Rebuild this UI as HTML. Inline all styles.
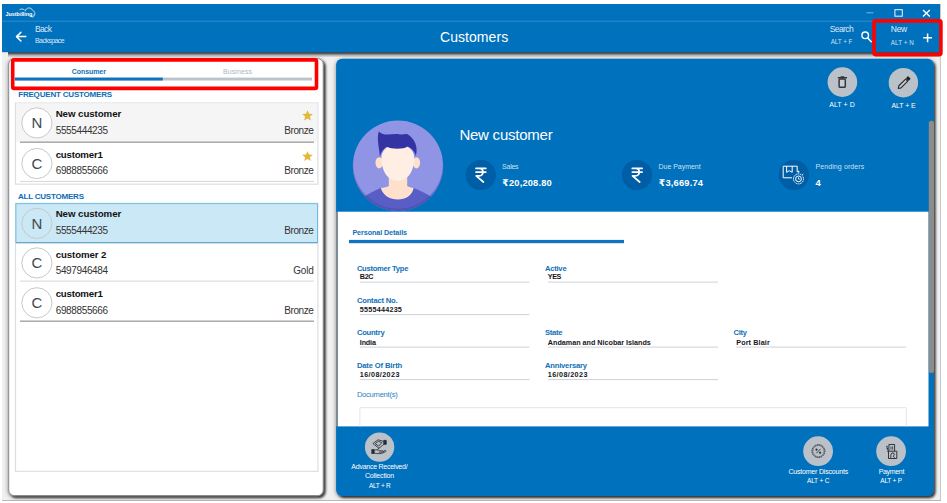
<!DOCTYPE html>
<html lang="en">
<head>
<meta charset="utf-8">
<title>Customers</title>
<style>
*{box-sizing:border-box;margin:0;padding:0}
html,body{width:947px;height:503px;overflow:hidden;background:#fff}
body{font-family:"Liberation Sans","DejaVu Sans",sans-serif;position:relative;color:#000}
svg#g{position:absolute;left:0;top:0}
.t{position:absolute;white-space:nowrap;line-height:1}
</style>
</head>
<body>
<svg id="g" width="947" height="503" viewBox="0 0 947 503">
  <defs>
    <linearGradient id="hs" x1="0" y1="0" x2="0" y2="1">
      <stop offset="0" stop-color="#383c40"/><stop offset=".3" stop-color="#5c6064"/><stop offset=".62" stop-color="#b6b6b6"/><stop offset="1" stop-color="#eeeeee"/>
    </linearGradient>
    <filter id="ps" x="-5%" y="-5%" width="110%" height="110%">
      <feGaussianBlur in="SourceAlpha" stdDeviation=".9" result="b1"/>
      <feOffset in="b1" dx="1.700" dy="1.700" result="o1"/>
      <feComponentTransfer in="o1" result="s1"><feFuncA type="linear" slope=".7"/></feComponentTransfer>
      <feGaussianBlur in="SourceAlpha" stdDeviation="1.900" result="b2"/>
      <feOffset in="b2" dx=".4" dy="1.300" result="o2"/>
      <feComponentTransfer in="o2" result="s2"><feFuncA type="linear" slope=".46"/></feComponentTransfer>
      <feMerge><feMergeNode in="s2"/><feMergeNode in="s1"/><feMergeNode in="SourceGraphic"/></feMerge>
    </filter>
    <clipPath id="avc"><circle cx="398" cy="165.700" r="45.200"/></clipPath>
    <path id="star" d="M0 -5.4L1.5 -1.8L5.4 -1.5L2.4 1L3.3 4.8L0 2.8L-3.3 4.800L-2.400 1L-5.400 -1.500L-1.500 -1.800Z" fill="#e3b93c"/>
    <g id="rupee" fill="none" stroke="#fff" stroke-width="1.7" stroke-linecap="round" stroke-linejoin="round">
      <path d="M-4.8 -6.6H5M-4.8 -2.9H5M-4.400 -6.600H-1.600C3.400 -6.600 3.400 .900 -1.600 .900H-4.600L2.600 7"/>
    </g>
  </defs>

  <!-- window -->
  <rect x="2" y="4" width="938.5" height="496.6" fill="#f0f0f0"/>
  <rect x="940" y="4" width="1" height="497" fill="#c8c8c8"/>
  <rect x="2" y="500" width="939" height="1" fill="#b8b8b8"/>
  <!-- header shadow -->
  <rect x="8" y="52" width="932" height="5.5" fill="url(#hs)"/>
  <!-- header -->
  <rect x="2" y="4" width="938" height="48.2" fill="#0071bc"/>
  <rect x="2" y="20.7" width="938" height="1" fill="#2f8bcb"/>

  <!-- logo cloud -->
  <path d="M19.800 9.600C21 8.700 22.800 8.700 24.200 9.700M25.200 10.800C26 7.600 30.800 6.600 32.600 10.400C35.400 11.400 35.800 15.400 32.800 17.200" fill="none" stroke="#fff" stroke-width=".8" stroke-linecap="round" opacity=".95"/>
  <path d="M30.200 16.600C31.800 17.200 33.400 16.200 33.800 14.400" fill="none" stroke="#fff" stroke-width=".6" opacity=".9"/>
  <!-- back arrow -->
  <path d="M25.800 36.600H16.800M20.900 32.200L16.500 36.600L20.900 41" fill="none" stroke="#fff" stroke-width="1.5" stroke-linecap="round" stroke-linejoin="round"/>

  <!-- window controls -->
  <rect x="866.4" y="12.300" width="7" height="1" fill="#7fb4dc"/>
  <rect x="894.900" y="9.700" width="7.400" height="6.500" fill="none" stroke="#e8f1f9" stroke-width="1.050"/>
  <path d="M923 10L929.800 16.400M929.800 10L923 16.400" stroke="#fff" stroke-width="1.400" fill="none"/>

  <!-- search icon -->
  <circle cx="865.2" cy="35.300" r="3.300" fill="none" stroke="#fff" stroke-width="1.400"/>
  <path d="M867.700 38L871.300 41.800" stroke="#fff" stroke-width="1.500" stroke-linecap="round"/>
  <!-- plus -->
  <path d="M927.600 33.400V42.200M923.200 37.800H932" stroke="#fff" stroke-width="1.500" fill="none"/>
  <!-- red box (New) -->
  <rect x="874" y="20.900" width="66.900" height="33.700" rx="1.500" fill="none" stroke="#fe0000" stroke-width="3.600"/>

  <!-- LEFT PANEL -->
  <rect x="8.700" y="58.600" width="314.500" height="437" rx="5.500" fill="#fff" stroke="#7c8288" stroke-width=".9" filter="url(#ps)"/>
  <!-- tabs -->
  <rect x="14.800" y="77.600" width="297.200" height="2.900" fill="#bcc3ca"/>
  <rect x="14.800" y="77.600" width="148" height="2.900" fill="#0f74c0"/>
  <rect x="12.700" y="59.900" width="303.800" height="28.500" rx="1.500" fill="none" stroke="#fe0000" stroke-width="3.600"/>

  <!-- frequent list -->
  <rect x="15.500" y="103" width="302.400" height="81.200" fill="#fff" stroke="#dcdfe2" stroke-width="1.200"/>
  <rect x="16" y="103.500" width="301.400" height="38.400" fill="#f5f5f5"/>
  <rect x="20" y="141.600" width="294" height="1.100" fill="#8a8a8a"/>
  <rect x="20" y="180.900" width="294" height="1" fill="#d6d6d6"/>
  <!-- all list -->
  <rect x="15.500" y="203.300" width="302.400" height="268" fill="#fff" stroke="#dcdfe2" stroke-width="1.200"/>
  <rect x="15.900" y="203.700" width="301.600" height="38.900" fill="#cbe8f6" stroke="#63b9e4" stroke-width=".9"/>
  <rect x="16" y="242.300" width="301.400" height="1" fill="#5e9cc4"/>
  <rect x="20" y="280.600" width="294" height="1" fill="#d6d6d6"/>
  <rect x="20" y="320.600" width="294" height="1.100" fill="#8a8a8a"/>
  <!-- avatars -->
  <g fill="#fff" stroke="#c8c8c8" stroke-width="1">
    <circle cx="36.900" cy="122.900" r="15.100"/>
    <circle cx="36.900" cy="163.500" r="15.100"/>
    <circle cx="36.900" cy="223.400" r="15.100" fill="none"/>
    <circle cx="36.900" cy="262.900" r="15.100"/>
    <circle cx="36.900" cy="302.800" r="15.100"/>
  </g>
  <use href="#star" x="307.500" y="115.600"/>
  <use href="#star" x="307.500" y="156.300"/>

  <!-- RIGHT PANEL -->
  <rect x="336.100" y="58.700" width="597.500" height="437.200" rx="6" fill="#0071bc" filter="url(#ps)"/>
  <rect x="337.900" y="211.700" width="590.600" height="214.700" fill="#fff"/>
  <rect x="336.100" y="211.700" width="1.800" height="214.700" fill="#8a8e92"/>
  <!-- scrollbar thumb -->
  <rect x="928.800" y="120.800" width="5.200" height="252.200" rx="2.500" fill="#8c8c8c"/>

  <!-- top action buttons -->
  <circle cx="842.400" cy="82.100" r="14.800" fill="#bac1c9"/>
  <circle cx="903.400" cy="82.700" r="14.700" fill="#bac1c9"/>
  <path d="M837.800 77.700H847M840.600 76.900H844.200" stroke="#33373c" stroke-width="1.500" fill="none"/>
  <rect x="839.100" y="79" width="6.200" height="8.300" rx="1.100" fill="#c6ccd3" stroke="#33373c" stroke-width="1.500"/>
  <g transform="translate(903.700 83.050) rotate(-45)">
    <path d="M-7.700 0L-5.300 -1.500H4.200V1.500H-5.300Z" fill="#c6ccd3" stroke="#26292d" stroke-width="1.100" stroke-linejoin="round"/>
    <rect x="4.900" y="-1.900" width="3.100" height="3.800" rx=".7" fill="#1e2124"/>
  </g>
  <!-- avatar -->
  <circle cx="398" cy="165.700" r="45.200" fill="#8f94e4"/>
  <g clip-path="url(#avc)">
    <path d="M355 212C358 199 366 194.500 380.800 188L413.600 188C429 194.500 438 199 441 212Z" fill="#595dc6"/>
    <path d="M388.800 172H407.200V186C409 187.200 411.500 187.800 413.600 188C411 203.400 385 203.400 380.800 188C384 187.800 387 187.200 388.800 186Z" fill="#ffe0cc"/>
    <ellipse cx="379.200" cy="162.800" rx="3.700" ry="5.600" fill="#ffe0cc"/>
    <ellipse cx="416.400" cy="162.800" rx="3.700" ry="5.600" fill="#ffe0cc"/>
    <path d="M381.400 158C381.400 139.500 414.200 139.500 414.200 158C414.200 170 408.500 180.800 397.800 180.800C387 180.800 381.400 170 381.400 158Z" fill="#ffeee3"/>
    <path d="M379.800 156.500C379.800 149 376.200 140 378.800 131.500C384.500 137 392 133 400 134.400C403 134.800 405.500 133.600 407.600 134.300C414.500 138.500 418.500 147 415.800 156C415 152 411.500 148 407.600 146.600C404 149.500 391 149.500 386.800 146.800C383.500 148.500 381 152.500 379.800 156.500Z" fill="#3333a4"/>
    <circle cx="398" cy="163.900" r="46" fill="none" stroke="#44479f" stroke-opacity=".45" stroke-width="2.400"/>
  </g>
  <!-- stats circles -->
  <circle cx="480.700" cy="175" r="15.100" fill="#005ea6"/>
  <circle cx="637" cy="175" r="15.100" fill="#005ea6"/>
  <circle cx="793.900" cy="175" r="15.100" fill="#005ea6"/>
  <use href="#rupee" x="480.800" y="175"/>
  <use href="#rupee" x="637.100" y="175"/>
  <!-- pending orders icon -->
  <g fill="none" stroke="#fff" stroke-width="1">
    <path d="M797.200 172V166.200H783.200V177.800H792"/>
    <path d="M786.600 166.200V172.300L789.400 170.700L792.200 172.300V166.200"/>
    <circle cx="798.500" cy="178.900" r="5" stroke-dasharray="1.500 .700"/>
    <circle cx="798.500" cy="178.900" r="2.900"/>
    <rect x="797.700" y="170.900" width="1.600" height="1.700" fill="#fff" stroke="none"/>
    <path d="M802.300 174.800L803.300 173.800"/>
    <path d="M798.500 177.400V179.100H799.700" stroke-width=".9"/>
  </g>

  <!-- personal details tab line -->
  <rect x="349" y="239.900" width="275" height="3.300" fill="#0f74c0"/>
  <!-- field underlines -->
  <g fill="#cdd2d9">
    <rect x="359.800" y="281.600" width="169.700" height="1"/>
    <rect x="548" y="281.600" width="170" height="1"/>
    <rect x="359.800" y="314.100" width="169.700" height="1"/>
    <rect x="359.800" y="346.600" width="169.700" height="1"/>
    <rect x="548" y="346.600" width="170" height="1"/>
    <rect x="736.200" y="346.600" width="170" height="1"/>
    <rect x="359.800" y="379.100" width="169.700" height="1"/>
    <rect x="548" y="379.100" width="170" height="1"/>
  </g>
  <!-- document box -->
  <path d="M359.900 426.400V407.700H906.300V426.400" fill="none" stroke="#e3e5e8" stroke-width="1"/>

  <!-- bottom buttons -->
  <circle cx="379.600" cy="447.100" r="14.700" fill="#bac1c9"/>
  <circle cx="818.100" cy="451.200" r="14.900" fill="#bac1c9"/>
  <circle cx="891.100" cy="451.200" r="14.900" fill="#bac1c9"/>
  <!-- advance icon: hands with money -->
  <g fill="none" stroke="#24272b" stroke-width=".8" stroke-linejoin="round" stroke-linecap="round">
    <rect x="384.200" y="440.400" width="2" height="3.900" fill="#24272b"/>
    <path d="M373.200 443.300L378 439.800L384.200 441.500L384.200 444L379.300 448Z"/>
    <path d="M375.500 443.400L378.300 441.400L381.800 442.600L379 445.800ZM379.300 448L377.600 449.400"/>
    <rect x="372.100" y="449.600" width="2" height="3.900" fill="#24272b"/>
    <path d="M374.200 450.200C376 449.500 378 449.700 379.600 450.800H382.600C383.600 450.900 383.500 452 382.600 452.100H379.200"/>
    <path d="M383.400 451.400L385 450.500C386 450.200 386.400 451 385.600 451.600C382 454 378 454.200 374.200 453"/>
  </g>
  <!-- discount icon -->
  <g fill="none" stroke="#24272b">
    <circle cx="818.400" cy="451.100" r="6.500" stroke-width=".9" stroke-dasharray="1.300 .7"/>
    <circle cx="818.400" cy="451.100" r="5.700" stroke-width=".5"/>
    <path d="M816.300 453.300L820.500 448.900" stroke-width=".8"/>
    <circle cx="816.500" cy="449.600" r=".9" fill="#24272b" stroke-width=".3"/>
    <circle cx="820.100" cy="452.700" r=".9" fill="#24272b" stroke-width=".3"/>
  </g>
  <!-- payment icon -->
  <g fill="none" stroke="#24272b" stroke-width=".9" stroke-linejoin="round">
    <path d="M888.900 451V444.500H894.600V451.200"/>
    <path d="M886.200 446.200L888 447.200M886.400 447.800L888.200 448.800M886.800 449.400L888.400 450.400M887.400 451L888.400 452" stroke-width="1"/>
    <rect x="888.500" y="451.200" width="8.300" height="7.300"/>
    <path d="M890.800 457.800C890.400 454.800 891.400 452.600 893 452.800C894.600 453 894.800 455.400 893.200 456.200L894.600 457.800"/>
    <path d="M891 446.400V449.600M892.600 446.400V449.600" stroke-width=".7"/>
  </g>
</svg>
<div class="t" style="left:5.60px;top:12.00px;font-size:5.4px;color:#fff;font-weight:700;letter-spacing:-0.015px;">Justbilling</div>
<div class="t" style="left:35.00px;top:25.00px;font-size:8.5px;color:rgba(255,255,255,.86);letter-spacing:-0.652px;">Back</div>
<div class="t" style="left:35.00px;top:37.00px;font-size:7px;color:rgba(255,255,255,.86);letter-spacing:-0.583px;">Backspace</div>
<div class="t" style="left:440.00px;top:30.00px;font-size:14px;color:#fff;letter-spacing:0.057px;">Customers</div>
<div class="t" style="left:829.70px;top:25.00px;font-size:8.5px;color:rgba(255,255,255,.86);letter-spacing:-0.590px;">Search</div>
<div class="t" style="left:830.70px;top:39.00px;font-size:6.3px;color:rgba(255,255,255,.8);letter-spacing:-0.057px;">ALT + F</div>
<div class="t" style="left:890.80px;top:25.00px;font-size:8.5px;color:rgba(255,255,255,.9);letter-spacing:-0.272px;">New</div>
<div class="t" style="left:890.80px;top:40.00px;font-size:6.3px;color:rgba(255,255,255,.8);letter-spacing:0.071px;">ALT + N</div>
<div class="t" style="left:71.70px;top:68.00px;font-size:7px;color:#0f70b7;font-weight:700;letter-spacing:-0.053px;">Consumer</div>
<div class="t" style="left:222.95px;top:68.00px;font-size:7px;color:#a9b7c3;letter-spacing:0.099px;">Business</div>
<div class="t" style="left:18.20px;top:91.00px;font-size:8px;color:#0b6db6;font-weight:700;letter-spacing:-0.189px;">FREQUENT CUSTOMERS</div>
<div class="t" style="left:17.90px;top:193.00px;font-size:8px;color:#0b6db6;font-weight:700;letter-spacing:-0.208px;">ALL CUSTOMERS</div>
<div class="t" style="left:55.70px;top:109.00px;font-size:9.7px;color:#111;font-weight:700;letter-spacing:-0.060px;">New customer</div>
<div class="t" style="left:55.70px;top:126.00px;font-size:10px;color:#333;letter-spacing:-0.362px;">5555444235</div>
<div class="t" style="left:284.20px;top:126.00px;font-size:10px;color:#333;letter-spacing:-0.398px;">Bronze</div>
<div class="t" style="left:55.70px;top:150.00px;font-size:9.7px;color:#111;font-weight:700;letter-spacing:-0.233px;">customer1</div>
<div class="t" style="left:55.70px;top:166.00px;font-size:10px;color:#333;letter-spacing:-0.362px;">6988855666</div>
<div class="t" style="left:284.20px;top:166.00px;font-size:10px;color:#333;letter-spacing:-0.398px;">Bronze</div>
<div class="t" style="left:55.70px;top:209.00px;font-size:9.7px;color:#111;font-weight:700;letter-spacing:-0.060px;">New customer</div>
<div class="t" style="left:55.70px;top:226.00px;font-size:10px;color:#333;letter-spacing:-0.362px;">5555444235</div>
<div class="t" style="left:284.20px;top:226.00px;font-size:10px;color:#333;letter-spacing:-0.398px;">Bronze</div>
<div class="t" style="left:55.70px;top:250.00px;font-size:9.7px;color:#111;font-weight:700;letter-spacing:-0.099px;">customer 2</div>
<div class="t" style="left:55.70px;top:266.00px;font-size:10px;color:#333;letter-spacing:-0.362px;">5497946484</div>
<div class="t" style="left:293.17px;top:266.00px;font-size:10px;color:#333;letter-spacing:-0.131px;">Gold</div>
<div class="t" style="left:55.70px;top:289.00px;font-size:9.7px;color:#111;font-weight:700;letter-spacing:-0.233px;">customer1</div>
<div class="t" style="left:55.70px;top:306.00px;font-size:10px;color:#333;letter-spacing:-0.362px;">6988855666</div>
<div class="t" style="left:284.20px;top:306.00px;font-size:10px;color:#333;letter-spacing:-0.398px;">Bronze</div>
<div class="t" style="left:31.48px;top:115.00px;font-size:15px;color:#3d4853;">N</div>
<div class="t" style="left:31.48px;top:156.00px;font-size:15px;color:#3d4853;">C</div>
<div class="t" style="left:31.48px;top:216.00px;font-size:15px;color:#3d4853;">N</div>
<div class="t" style="left:31.48px;top:255.00px;font-size:15px;color:#3d4853;">C</div>
<div class="t" style="left:31.48px;top:295.00px;font-size:15px;color:#3d4853;">C</div>
<div class="t" style="left:829.18px;top:101.00px;font-size:7px;color:#fff;letter-spacing:0.067px;">ALT + D</div>
<div class="t" style="left:891.41px;top:102.00px;font-size:7px;color:#fff;letter-spacing:-0.078px;">ALT + E</div>
<div class="t" style="left:459.40px;top:127.00px;font-size:15px;color:#fff;letter-spacing:-0.238px;">New customer</div>
<div class="t" style="left:502.10px;top:163.00px;font-size:7px;color:rgba(255,255,255,.8);letter-spacing:-0.263px;">Sales</div>
<div class="t" style="left:502.30px;top:179.00px;font-size:9.3px;color:#fff;font-weight:700;letter-spacing:0.176px;">₹20,208.80</div>
<div class="t" style="left:658.60px;top:163.00px;font-size:7px;color:rgba(255,255,255,.8);letter-spacing:-0.038px;">Due Payment</div>
<div class="t" style="left:658.80px;top:179.00px;font-size:9.3px;color:#fff;font-weight:700;letter-spacing:0.192px;">₹3,669.74</div>
<div class="t" style="left:815.40px;top:163.00px;font-size:7px;color:rgba(255,255,255,.8);letter-spacing:0.108px;">Pending orders</div>
<div class="t" style="left:815.60px;top:179.00px;font-size:9.3px;color:#fff;font-weight:700;">4</div>
<div class="t" style="left:352.40px;top:229.00px;font-size:7.2px;color:#0f70b7;font-weight:700;letter-spacing:-0.084px;">Personal Details</div>
<div class="t" style="left:356.90px;top:265.00px;font-size:7.6px;color:#0f70b7;font-weight:700;letter-spacing:-0.271px;">Customer Type</div>
<div class="t" style="left:359.80px;top:273.00px;font-size:7.2px;color:#161616;font-weight:700;letter-spacing:-0.330px;">B2C</div>
<div class="t" style="left:544.90px;top:265.00px;font-size:7.6px;color:#0f70b7;font-weight:700;letter-spacing:-0.216px;">Active</div>
<div class="t" style="left:547.80px;top:273.00px;font-size:7.2px;color:#161616;font-weight:700;letter-spacing:-0.464px;">YES</div>
<div class="t" style="left:356.90px;top:297.00px;font-size:7.6px;color:#0f70b7;font-weight:700;letter-spacing:-0.192px;">Contact No.</div>
<div class="t" style="left:359.80px;top:306.00px;font-size:7.2px;color:#161616;font-weight:700;letter-spacing:0.232px;">5555444235</div>
<div class="t" style="left:356.90px;top:329.00px;font-size:7.6px;color:#0f70b7;font-weight:700;letter-spacing:-0.230px;">Country</div>
<div class="t" style="left:359.80px;top:339.00px;font-size:7.2px;color:#161616;font-weight:700;letter-spacing:-0.156px;">India</div>
<div class="t" style="left:544.90px;top:329.00px;font-size:7.6px;color:#0f70b7;font-weight:700;letter-spacing:-0.216px;">State</div>
<div class="t" style="left:547.80px;top:339.00px;font-size:7.2px;color:#161616;font-weight:700;">Andaman and Nicobar Islands</div>
<div class="t" style="left:733.40px;top:329.00px;font-size:7.6px;color:#0f70b7;font-weight:700;letter-spacing:-0.215px;">City</div>
<div class="t" style="left:736.30px;top:339.00px;font-size:7.2px;color:#161616;font-weight:700;letter-spacing:0.114px;">Port Blair</div>
<div class="t" style="left:356.90px;top:362.00px;font-size:7.6px;color:#0f70b7;font-weight:700;letter-spacing:-0.126px;">Date Of Birth</div>
<div class="t" style="left:359.80px;top:371.00px;font-size:7.2px;color:#161616;font-weight:700;letter-spacing:0.402px;">16/08/2023</div>
<div class="t" style="left:544.90px;top:362.00px;font-size:7.6px;color:#0f70b7;font-weight:700;letter-spacing:-0.173px;">Anniversary</div>
<div class="t" style="left:547.80px;top:371.00px;font-size:7.2px;color:#161616;font-weight:700;letter-spacing:0.402px;">16/08/2023</div>
<div class="t" style="left:356.90px;top:391.00px;font-size:7.6px;color:#2a7fc0;letter-spacing:-0.261px;">Document(s)</div>
<div class="t" style="left:351.37px;top:463.00px;font-size:7px;color:#fff;letter-spacing:-0.255px;">Advance Received/</div>
<div class="t" style="left:364.92px;top:472.00px;font-size:7px;color:#fff;letter-spacing:-0.155px;">Collection</div>
<div class="t" style="left:368.91px;top:483.00px;font-size:6.5px;color:#fff;letter-spacing:-0.277px;">ALT + R</div>
<div class="t" style="left:788.40px;top:468.00px;font-size:7px;color:#fff;letter-spacing:-0.191px;">Customer Discounts</div>
<div class="t" style="left:806.97px;top:478.00px;font-size:6.5px;color:#fff;letter-spacing:-0.162px;">ALT + C</div>
<div class="t" style="left:878.64px;top:468.00px;font-size:7px;color:#fff;letter-spacing:-0.318px;">Payment</div>
<div class="t" style="left:880.34px;top:478.00px;font-size:6.5px;color:#fff;letter-spacing:-0.225px;">ALT + P</div>
</body>
</html>
